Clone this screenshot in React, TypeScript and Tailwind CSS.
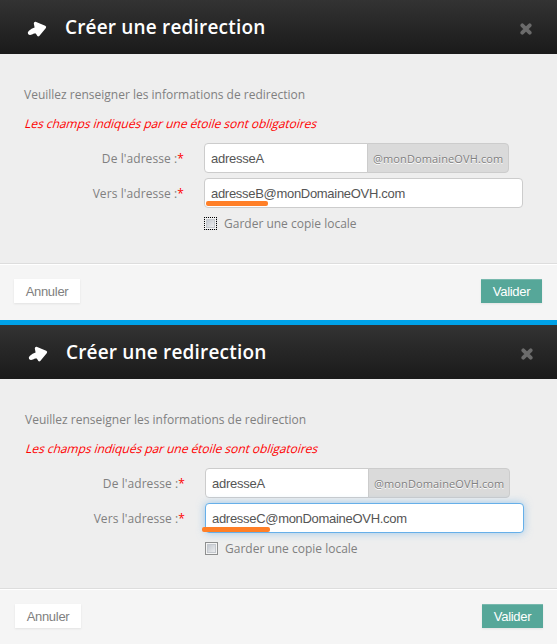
type DialogProps = {
  target: string;
  focused?: boolean;
};

function ArrowIcon() {
  return (
    <svg width="20" height="17" viewBox="0 0 20 17" className="shrink-0">
      <path
        d="M8.6 0.8 L18.2 4.8 Q19.8 5.6 18.9 6.9 L12.3 15 Q11 16 10.2 14.8 L8.8 12.4 L7 12.4 L5 13.6 Q2.4 14.7 1.1 13.1 Q0.2 11.4 1.7 9.9 Q4.6 7.4 7.6 6.6 L6.8 2.6 Q6.9 0.6 8.6 0.8 Z"
        fill="#fff"
      />
    </svg>
  );
}

function CloseIcon() {
  return (
    <svg width="12" height="12" viewBox="0 0 12 12" className="shrink-0">
      <path d="M2.3 2.3 L9.7 9.7 M9.7 2.3 L2.3 9.7" stroke="#6b6b6b" strokeWidth="3.8" strokeLinecap="round" />
    </svg>
  );
}

function Label({ children }: { children: string }) {
  return (
    <div className="w-[160px] shrink-0 pt-px text-right leading-[30px] tracking-[0.08px]">
      {children}
      <span className="text-[#ff0000]">*</span>
    </div>
  );
}

function RedirectionDialog({ target, focused = false }: DialogProps) {
  const shift = focused ? "pl-px" : "";
  return (
    <section className="w-full">
      <header className="h-[54px] bg-linear-to-b from-[#333] to-[#1a1a1a]">
        <div className={`flex h-full items-center ${shift}`}>
          <div className="w-[65px] shrink-0 pt-[4px] pl-[27px]">
            <ArrowIcon />
          </div>
          <h1 className="w-[455px] shrink-0 font-['Open_Sans',sans-serif] text-[19px] leading-[54px] font-semibold text-white">
            <span className="tracking-[0.18px]">Créer une redirection</span>
          </h1>
          <div className="pt-[4px]">
            <CloseIcon />
          </div>
        </div>
      </header>

      <div className={`h-[209px] bg-[#eee] pt-[31px] ${shift}`}>
        <p className="pl-6 leading-5">Veuillez renseigner les informations de redirection</p>
        <p className="mt-[9px] pl-6 leading-5 tracking-[-0.04px] text-[#ff0000]">
          <span className="inline-block origin-[0_70%] -skew-x-[17deg]">
            Les champs indiqués par une étoile sont obligatoires
          </span>
        </p>

        <div className="mt-[9px] flex h-[30px] pl-6">
          <Label>De l'adresse :</Label>
          <div className="ml-[20px] flex h-[30px] w-[305px] font-['Liberation_Sans',Arial,sans-serif]">
            <div className="w-[164px] rounded-l border border-[#ccc] bg-white pl-1.5 text-[13px] leading-[29px] tracking-[-0.25px] text-[#555]">
              adresseA
            </div>
            <div className="-ml-px w-[142px] rounded-r border border-[#ccc] bg-[#dadada] pl-[5px] font-['Open_Sans',sans-serif] text-[11px] leading-[30px] tracking-[0.12px] text-[#808080] [text-shadow:0_1px_0_#fff]">
              @monDomaineOVH.com
            </div>
          </div>
        </div>

        <div className="mt-[5px] flex h-[30px] pl-6">
          <Label>Vers l'adresse :</Label>
          <div
            className={`relative ml-[20px] h-[30px] w-[319px] rounded border bg-white pl-1.5 font-['Liberation_Sans',Arial,sans-serif] text-[13px] leading-[29px] tracking-[-0.3px] text-[#555] ${
              focused ? "border-[#66afe9] shadow-[0_0_8px_rgba(102,175,233,0.6)]" : "border-[#ccc]"
            }`}
          >
            {target}@monDomaineOVH.com
            <span
              className={`absolute rounded-[2px] bg-[#ff7f27] ${
                focused ? "top-[23px] -left-[4px] h-[5px] w-[68px]" : "top-[22px] left-[1px] h-[5px] w-[62px]"
              }`}
            />
          </div>
        </div>

        <div className="mt-[6px] flex items-start pl-[204px] leading-5">
          <span
            className={`mt-[3px] h-[13px] w-[13px] border bg-linear-to-br from-[#b9bfc8] to-[#f6f6f6] ${
              focused
                ? "border-[#8e8f8f] shadow-[inset_0_0_0_1px_#f4f4f4,inset_0_0_0_2px_#c4c8ce]"
                : "border-dotted border-black shadow-[inset_0_0_0_1px_#f4f4f4,inset_0_0_0_2px_#c4c8ce]"
            }`}
          />
          <span className="ml-[7px]">Garder une copie locale</span>
        </div>
      </div>

      <footer
        className={`flex h-[57px] items-start border-t border-[#ddd] bg-[#f5f5f5] pt-[15px] font-['Liberation_Sans',Arial,sans-serif] text-[13px] leading-[25px] tracking-[-0.3px] shadow-[inset_0_1px_0_#fff] ${shift}`}
      >
        <button className="ml-3.5 h-6 w-[66px] bg-white text-[#808080] shadow-[0_1px_2px_rgba(0,0,0,0.08)]">
          Annuler
        </button>
        <button className="ml-[401px] h-6 w-[61px] bg-[#56a799] text-white shadow-[inset_0_1px_0_#78b9ae,0_1px_2px_rgba(0,0,0,0.08)]">
          Valider
        </button>
      </footer>
    </section>
  );
}

export default function App() {
  return (
    <main className="h-[644px] w-[557px] overflow-hidden bg-[#f5f5f5] font-['Open_Sans',sans-serif] text-[12px] text-[#808080]">
      <RedirectionDialog target="adresseB" />
      <div className="h-[5px] bg-[#00a2e8]" />
      <RedirectionDialog target="adresseC" focused />
    </main>
  );
}
